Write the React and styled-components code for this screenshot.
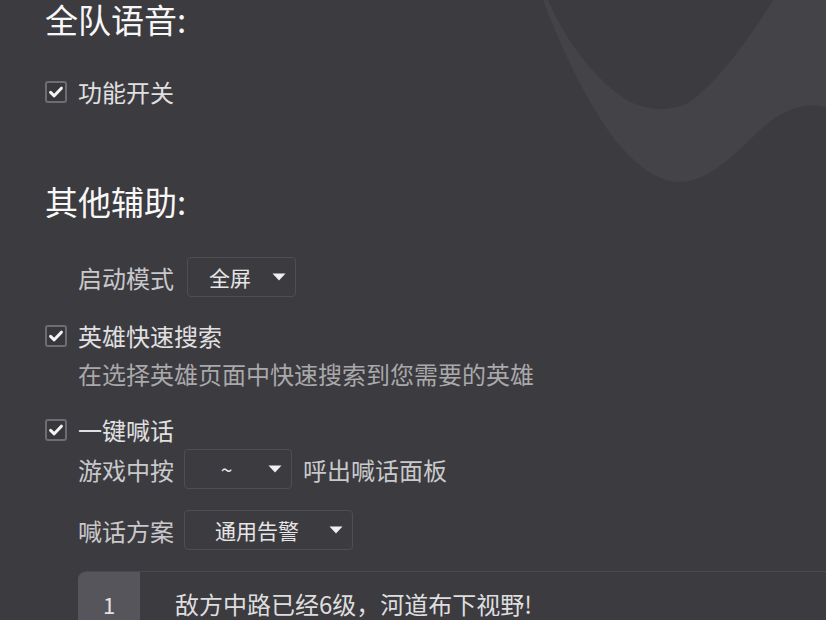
import React from "react";
import styled, { createGlobalStyle } from "styled-components";

const Global = createGlobalStyle`
  html, body { margin: 0; padding: 0; background: #3c3b40; }
  body { font-family: "Noto Sans CJK SC", "Noto Sans", sans-serif; }
  #root { width: 826px; height: 620px; overflow: hidden; }
`;

const Page = styled.div`
  position: relative;
  width: 826px;
  height: 620px;
  overflow: hidden;
  background: #3c3b40;
  box-sizing: border-box;
  padding: 0 0 0 45px;
`;

const Decor = styled.svg`
  position: absolute;
  left: 0;
  top: 0;
  z-index: 0;
  pointer-events: none;
`;

const Content = styled.div`
  position: relative;
  z-index: 1;
  display: flex;
  flex-direction: column;
`;

const Heading = styled.h2`
  margin: ${(p) => p.$mt || 0}px 0 0;
  font-size: 33px;
  line-height: 38px;
  height: 38px;
  font-weight: 400;
  color: #f7f7f7;
`;

const CheckRow = styled.label`
  display: flex;
  align-items: center;
  gap: 11px;
  height: 24px;
  margin-top: ${(p) => p.$mt || 0}px;
  font-size: 24px;
  line-height: 24px;
  color: #e0e0e0;
`;

const Box = styled.span`
  width: 22px;
  height: 22px;
  box-sizing: border-box;
  border: 2px solid #6e6d73;
  border-radius: 3px;
  background: #38373c;
  display: flex;
  align-items: center;
  justify-content: center;
`;

const Desc = styled.div`
  margin-top: ${(p) => p.$mt || 0}px;
  padding-left: 33px;
  font-size: 24px;
  line-height: 24px;
  color: #a9a9ab;
`;

const FieldRow = styled.div`
  display: flex;
  align-items: center;
  height: 40px;
  margin-top: ${(p) => p.$mt || 0}px;
  padding-left: 33px;
  font-size: 24px;
  color: #c9c9cb;
`;

const Label = styled.span`
  margin-right: ${(p) => p.$gap || 13}px;
  white-space: nowrap;
`;

const Trail = styled.span`
  margin-left: 11px;
  white-space: nowrap;
`;

const SelectBox = styled.div`
  width: ${(p) => p.$w}px;
  height: 40px;
  box-sizing: border-box;
  border: 1px solid #4f4e54;
  border-radius: 4px;
  display: flex;
  align-items: center;
  padding-right: 9px;
  font-size: 21px;
  color: #e6e6e6;
`;

const SelectText = styled.span`
  flex: 1;
  text-align: center;
`;

const Table = styled.div`
  margin-top: 21px;
  margin-left: 33px;
  border-top: 1px solid #4a494e;
  border-top-left-radius: 8px;
  overflow: hidden;
  display: flex;
  flex-direction: column;
`;

const Row = styled.div`
  display: flex;
  height: 48px;
`;

const NumCell = styled.div`
  width: 62px;
  background: #56555b;
  box-sizing: border-box;
  padding-top: 17px;
  text-align: center;
  font-size: 22px;
  line-height: 30px;
  color: #e2e2e2;
`;

const TextCell = styled.div`
  flex: 1;
  box-sizing: border-box;
  padding: 17px 0 0 35px;
  font-size: 24px;
  line-height: 30px;
  color: #dedede;
`;

const Check = () => (
  <Box>
    <svg width="16" height="16" viewBox="0 0 16 16">
      <path d="M2.6 8.4 L6.2 11.8 L13.4 4.2" fill="none" stroke="#f4f4f4" strokeWidth="3" strokeLinecap="round" strokeLinejoin="round" />
    </svg>
  </Box>
);

const Caret = () => (
  <svg width="14" height="8" viewBox="0 0 14 8">
    <path d="M0.5 0.5 L13.5 0.5 L7 7.5 Z" fill="#f0f0f0" />
  </svg>
);

const Select = ({ w, value }) => (
  <SelectBox $w={w}>
    <SelectText>{value}</SelectText>
    <Caret />
  </SelectBox>
);

export default function App() {
  return (
    <>
      <Global />
      <Page>
        <Decor width="826" height="620" viewBox="0 0 826 620">
          <path
            d="M543 0 C560 45 585 100 615 140 C640 170 660 182 680 182 C705 182 730 160 760 130 C785 108 805 102 826 107 L826 0 L773 0 C755 30 720 80 690 102 C675 110 650 113 627 100 C595 80 565 40 548 0 Z"
            fill="#444348"
          />
        </Decor>
        <Content>
          <Heading>全队语音:</Heading>
          <CheckRow $mt={42}>
            <Check />
            功能开关
          </CheckRow>

          <Heading $mt={78}>其他辅助:</Heading>
          <FieldRow $mt={37}>
            <Label $gap={13}>启动模式</Label>
            <Select w={109} value="全屏" />
          </FieldRow>

          <CheckRow $mt={27}>
            <Check />
            英雄快速搜索
          </CheckRow>
          <Desc $mt={14}>在选择英雄页面中快速搜索到您需要的英雄</Desc>

          <CheckRow $mt={32}>
            <Check />
            一键喊话
          </CheckRow>
          <FieldRow $mt={7}>
            <Label $gap={10}>游戏中按</Label>
            <Select w={108} value="~" />
            <Trail>呼出喊话面板</Trail>
          </FieldRow>
          <FieldRow $mt={21}>
            <Label $gap={10}>喊话方案</Label>
            <Select w={169} value="通用告警" />
          </FieldRow>

          <Table>
            <Row>
              <NumCell>1</NumCell>
              <TextCell>敌方中路已经6级，河道布下视野!</TextCell>
            </Row>
          </Table>
        </Content>
      </Page>
    </>
  );
}
